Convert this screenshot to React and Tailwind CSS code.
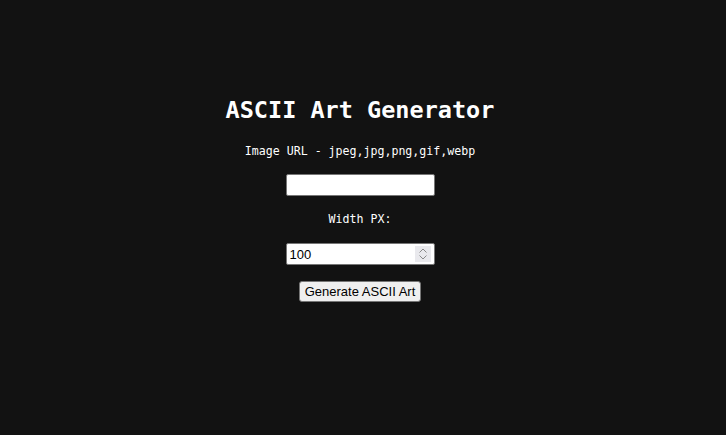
import React, { useState } from "react";

const mono = { fontFamily: '"DejaVu Sans Mono", "Liberation Mono", monospace' };

export default function App() {
  const [url, setUrl] = useState("");
  const [width, setWidth] = useState("100");

  return (
    <div className="min-h-screen w-full bg-[#121212] text-white flex flex-col items-center pt-[96px] pr-[6px]" style={mono}>
      <h1 className="text-[23.5px] leading-[28px] font-bold">ASCII Art Generator</h1>

      <label className="mt-[20px] text-[11.6px] leading-[14px]">Image URL - jpeg,jpg,png,gif,webp</label>
      <input
        className="mt-[16px] w-[149px] h-[22px] bg-white border border-[#767676] rounded-[2px] px-[3px] text-black text-[13px] outline-none"
        style={{ fontFamily: '"Liberation Sans", Arial, sans-serif' }}
        value={url}
        onChange={(e) => setUrl(e.target.value)}
      />

      <label className="mt-[16px] text-[11.6px] leading-[14px]">Width PX:</label>
      <div className="mt-[17px] w-[149px] h-[22px] bg-white border border-[#767676] rounded-[2px] flex items-center">
        <input
          className="flex-1 min-w-0 h-full pl-[3px] text-black text-[13px] outline-none bg-transparent"
          style={{ fontFamily: '"Liberation Sans", Arial, sans-serif' }}
          value={width}
          onChange={(e) => setWidth(e.target.value)}
        />
        <div className="w-[16px] h-[16px] mr-[3px] bg-[#e9e9ed] flex flex-col items-center justify-center gap-[2px]">
          <svg width="8" height="5" viewBox="0 0 8 5" fill="none" stroke="#8a8a8a" strokeWidth="1">
            <path d="M0.5 4.5 L4 1 L7.5 4.5" />
          </svg>
          <svg width="8" height="5" viewBox="0 0 8 5" fill="none" stroke="#8a8a8a" strokeWidth="1">
            <path d="M0.5 0.5 L4 4 L7.5 0.5" />
          </svg>
        </div>
      </div>

      <button
        className="mt-[16px] h-[21px] px-[5px] bg-[#efefef] border border-[#767676] rounded-[3px] text-black text-[13px] leading-[15px]"
        style={{ fontFamily: '"Liberation Sans", Arial, sans-serif' }}
      >
        Generate ASCII Art
      </button>
    </div>
  );
}
